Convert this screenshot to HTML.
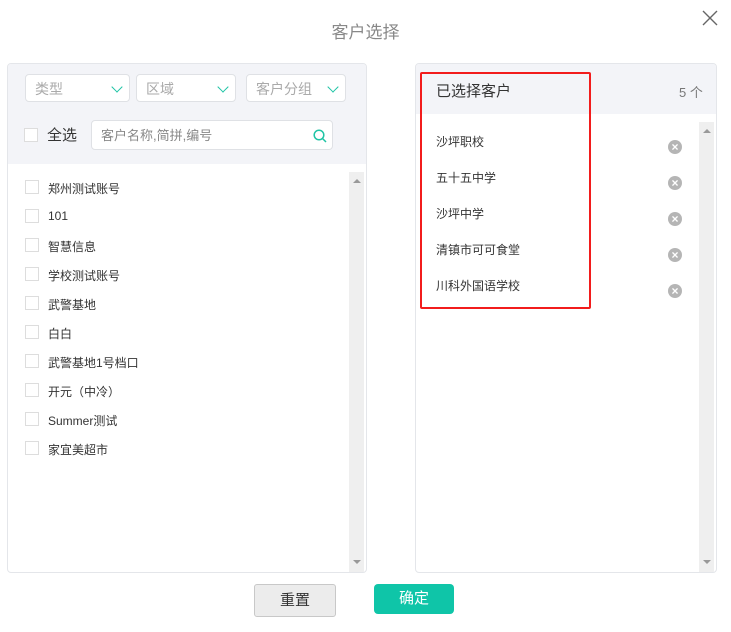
<!DOCTYPE html><html><head><meta charset="utf-8"><style>
body{margin:0;width:731px;height:632px;background:#fff;font-family:"Liberation Sans","Noto Sans CJK SC",sans-serif;position:relative;overflow:hidden}
.a{position:absolute;white-space:nowrap}
.title{left:0;width:731px;top:18px;text-align:center;font-size:17px;color:#888}
.panel{border:1px solid #e4e6ea;border-radius:4px;background:#fff;overflow:hidden}
.sel{background:#fff;border:1px solid #dfe1e5;border-radius:4px;height:28px;font-size:14px;color:#aaa;line-height:28px;padding-left:9px;box-sizing:border-box}
.chev{position:absolute;right:8px;top:8px;width:7px;height:7px;border-right:1.6px solid #1fc4a5;border-bottom:1.6px solid #1fc4a5;transform:rotate(45deg)}
.cb{width:12px;height:12px;border:1px solid #ddd;background:#fff}
.row{font-size:12px;color:#333}
.x{width:14px;height:14px;border-radius:50%;background:#b5b5b5;color:#fff;font-size:12px;line-height:14px;text-align:center;font-weight:bold}
.sb{background:#efefef;width:15px}
.up{width:0;height:0;border-left:4px solid transparent;border-right:4px solid transparent;border-bottom:4px solid #999}
.dn{width:0;height:0;border-left:4px solid transparent;border-right:4px solid transparent;border-top:4px solid #999}
</style></head><body>
<div class="a title">客户选择</div>
<svg class="a" style="left:702px;top:10px" width="16" height="16"><path d="M1 1L15 15M15 1L1 15" stroke="#666" stroke-width="1.4"/></svg>

<div class="a panel" style="left:7px;top:63px;width:358px;height:508px">
 <div class="a" style="left:0;top:0;width:358px;height:100px;background:#f3f4f8"></div>
 <div class="a sel" style="left:17px;top:10px;width:105px">类型<span class="chev"></span></div>
 <div class="a sel" style="left:128px;top:10px;width:100px">区域<span class="chev"></span></div>
 <div class="a sel" style="left:238px;top:10px;width:100px">客户分组<span class="chev"></span></div>
 <div class="a cb" style="left:16px;top:64px;width:12px;height:12px"></div>
 <div class="a" style="left:39px;top:60px;font-size:15px;color:#333">全选</div>
 <div class="a sel" style="left:83px;top:56px;width:242px;height:30px;line-height:30px;color:#888;font-size:13px">客户名称,简拼,编号
  <svg class="a" style="right:5px;top:8px" width="14" height="14"><circle cx="6" cy="6" r="4.8" fill="none" stroke="#1fc4a5" stroke-width="1.5"/><path d="M9.5 9.5L13 13" stroke="#1fc4a5" stroke-width="1.5"/></svg></div>
 <div class="a sb" style="left:341px;top:108px;height:400px"></div>
 <div class="a up" style="left:345px;top:115px"></div>
 <div class="a dn" style="left:345px;top:496px"></div>
</div>
 <div class="a cb" style="left:25px;top:180px"></div><div class="a row" style="left:48px;top:180px">郑州测试账号</div>
 <div class="a cb" style="left:25px;top:209px"></div><div class="a row" style="left:48px;top:209px">101</div>
 <div class="a cb" style="left:25px;top:238px"></div><div class="a row" style="left:48px;top:238px">智慧信息</div>
 <div class="a cb" style="left:25px;top:267px"></div><div class="a row" style="left:48px;top:267px">学校测试账号</div>
 <div class="a cb" style="left:25px;top:296px"></div><div class="a row" style="left:48px;top:296px">武警基地</div>
 <div class="a cb" style="left:25px;top:325px"></div><div class="a row" style="left:48px;top:325px">白白</div>
 <div class="a cb" style="left:25px;top:354px"></div><div class="a row" style="left:48px;top:354px">武警基地1号档口</div>
 <div class="a cb" style="left:25px;top:383px"></div><div class="a row" style="left:48px;top:383px">开元（中冷）</div>
 <div class="a cb" style="left:25px;top:412px"></div><div class="a row" style="left:48px;top:412px">Summer测试</div>
 <div class="a cb" style="left:25px;top:441px"></div><div class="a row" style="left:48px;top:441px">家宜美超市</div>

<div class="a panel" style="left:415px;top:63px;width:300px;height:508px">
 <div class="a" style="left:0;top:0;width:300px;height:50px;background:#f3f4f8"></div>
 <div class="a" style="left:20px;top:16px;font-size:15px;color:#333">已选择客户</div>
 <div class="a" style="left:263px;top:18px;font-size:13px;color:#777">5 个</div>
 <div class="a sb" style="left:283px;top:58px;height:450px"></div>
 <div class="a up" style="left:287px;top:65px"></div>
 <div class="a dn" style="left:287px;top:496px"></div>
</div>
<div class="a row" style="left:436px;top:133px">沙坪职校</div>
<div class="a row" style="left:436px;top:169px">五十五中学</div>
<div class="a row" style="left:436px;top:205px">沙坪中学</div>
<div class="a row" style="left:436px;top:241px">清镇市可可食堂</div>
<div class="a row" style="left:436px;top:277px">川科外国语学校</div>
<div class="a x" style="left:668px;top:140px">×</div>
<div class="a x" style="left:668px;top:176px">×</div>
<div class="a x" style="left:668px;top:212px">×</div>
<div class="a x" style="left:668px;top:248px">×</div>
<div class="a x" style="left:668px;top:284px">×</div>
<div class="a" style="left:420px;top:72px;width:167px;height:233px;border:2px solid #f21c1c;border-radius:2px"></div>

<div class="a" style="left:254px;top:584px;width:80px;height:31px;border:1px solid #c8c8c8;border-radius:3px;background:#ececec;text-align:center;line-height:31px;font-size:15px;color:#333">重置</div>
<div class="a" style="left:374px;top:584px;width:80px;height:30px;border-radius:4px;background:#0fc5a8;text-align:center;line-height:30px;font-size:15px;color:#fff">确定</div>
</body></html>
